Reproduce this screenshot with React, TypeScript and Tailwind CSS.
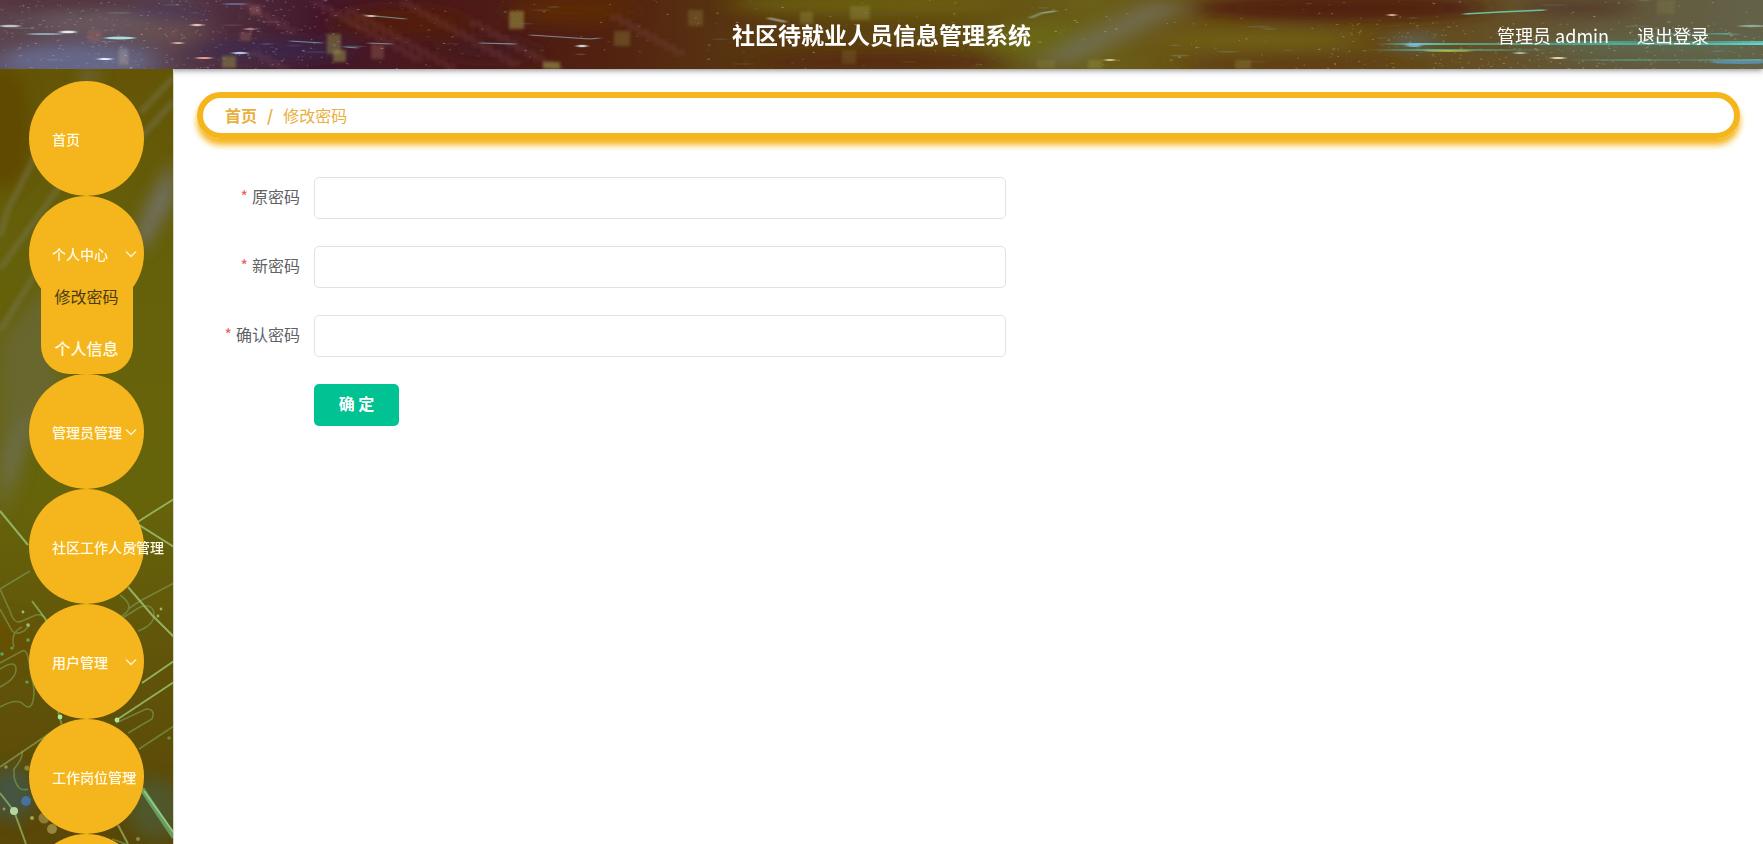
import React from "react";

type MenuEntry = {
  label: string;
  expandable?: boolean;
  children?: { label: string; active?: boolean }[];
};

const menu: MenuEntry[] = [
  { label: "首页" },
  {
    label: "个人中心",
    expandable: true,
    children: [{ label: "修改密码", active: true }, { label: "个人信息" }],
  },
  { label: "管理员管理", expandable: true },
  { label: "社区工作人员管理", expandable: true },
  { label: "用户管理", expandable: true },
  { label: "工作岗位管理", expandable: true },
];

const fields = [
  { id: "old-password", label: "原密码" },
  { id: "new-password", label: "新密码" },
  { id: "confirm-password", label: "确认密码" },
];

// Small seeded generator so the artwork is the same on every render.
function seeded(seed: number) {
  let s = seed;
  return () => {
    s = (s * 16807) % 2147483647;
    return s / 2147483647;
  };
}

const rand = seeded(77);
const specks = Array.from({ length: 900 }, (_, i) => {
  const zone = i % 3;
  const x = zone === 0 ? rand() * 340 : zone === 1 ? rand() * 1763 : 1330 + rand() * 433;
  const y = zone === 0 ? rand() * 69 : zone === 1 ? rand() * 69 : 22 + rand() * 47;
  return { x, y, w: 0.5 + rand() * 1.3, o: 0.1 + rand() * 0.32, c: zone === 0 ? "#b9b6de" : "#cfc8a0" };
});
const trails = Array.from({ length: 40 }, () => ({
  x: rand() * 1740,
  y: rand() * 66,
  w: 6 + rand() * 22,
  o: 0.1 + rand() * 0.2,
}));
const steps = [
  [240, 2, 6], [312, 0, 12], [345, 8, 12], [400, 0, 13], [250, 50, 4], [470, 20, 12], [610, 14, 8],
].flatMap(([x0, y0, n]) =>
  Array.from({ length: n }, (_, i) => ({ x: x0 + i * 9, y: y0 + i * 5 })),
);
const blocks = [
  [509, 11, 15, 18, 0.55], [327, 34, 14, 20, 0.45], [333, 50, 13, 12, 0.5], [222, 56, 14, 12, 0.45],
  [543, 62, 17, 7, 0.6], [688, 10, 15, 16, 0.28], [800, 12, 13, 12, 0.35], [850, 6, 20, 14, 0.35],
  [842, 50, 14, 14, 0.2], [614, 31, 16, 15, 0.3], [1088, 60, 14, 9, 0.35], [1037, 60, 18, 9, 0.2],
  [1235, 60, 16, 9, 0.3], [1657, 0, 18, 14, 0.2],
];
const roseBlocks = [
  [250, 5, 11, 10], [240, 32, 11, 9], [371, 44, 13, 15], [88, 30, 14, 12], [118, 52, 11, 14],
];

function HeaderArt() {
  return (
    <svg
      className="absolute inset-0 h-full w-full"
      viewBox="0 0 1763 69"
      preserveAspectRatio="none"
      aria-hidden="true"
    >
      <defs>
        <linearGradient id="hBase">
          <stop offset="0" stopColor="#5c444e" />
          <stop offset="0.08" stopColor="#5e4a55" />
          <stop offset="0.13" stopColor="#4f2d3c" />
          <stop offset="0.18" stopColor="#43182b" />
          <stop offset="0.25" stopColor="#4c1a1a" />
          <stop offset="0.34" stopColor="#522110" />
          <stop offset="0.42" stopColor="#583611" />
          <stop offset="0.52" stopColor="#5e4712" />
          <stop offset="0.62" stopColor="#6b6019" />
          <stop offset="0.7" stopColor="#684c14" />
          <stop offset="0.8" stopColor="#644917" />
          <stop offset="0.9" stopColor="#64583a" />
          <stop offset="1" stopColor="#636248" />
        </linearGradient>
        <filter id="hSoft" x="-30%" y="-60%" width="160%" height="220%">
          <feGaussianBlur stdDeviation="14 7" />
        </filter>
        <filter id="hFine" x="-30%" y="-200%" width="160%" height="500%">
          <feGaussianBlur stdDeviation="2 0.7" />
        </filter>
        <filter id="hBlock" x="-30%" y="-30%" width="160%" height="160%">
          <feGaussianBlur stdDeviation="1.5" />
        </filter>
        <linearGradient id="hBeam">
          <stop offset="0" stopColor="#4fbfae" stopOpacity="0" />
          <stop offset="0.35" stopColor="#4fc9b8" stopOpacity="0.7" />
          <stop offset="0.6" stopColor="#4aa592" stopOpacity="0.5" />
          <stop offset="1" stopColor="#63ddd4" />
        </linearGradient>
        <linearGradient id="hLeftBeam">
          <stop offset="0" stopColor="#4fc9b8" stopOpacity="0" />
          <stop offset="0.4" stopColor="#62cfae" stopOpacity="0.9" />
          <stop offset="1" stopColor="#4fc9b8" stopOpacity="0.1" />
        </linearGradient>
      </defs>
      <rect width="1763" height="69" fill="url(#hBase)" />
      <g filter="url(#hSoft)">
        <ellipse cx="75" cy="62" rx="80" ry="18" fill="#6b75a0" opacity="0.7" />
        <ellipse cx="70" cy="2" rx="100" ry="6" fill="#4c2430" opacity="0.8" />
        <ellipse cx="95" cy="24" rx="60" ry="12" fill="#6a5a60" opacity="0.8" />
        <ellipse cx="165" cy="32" rx="38" ry="12" fill="#6a5350" opacity="0.8" />
        <ellipse cx="170" cy="13" rx="40" ry="6" fill="#3f3360" opacity="0.6" />
        <ellipse cx="270" cy="50" rx="80" ry="10" fill="#382a58" opacity="0.65" />
        <ellipse cx="570" cy="10" rx="60" ry="14" fill="#602f08" opacity="0.7" />
        <ellipse cx="400" cy="22" rx="70" ry="16" fill="#581e0a" opacity="0.6" />
        <ellipse cx="490" cy="50" rx="50" ry="12" fill="#451521" opacity="0.8" />
        <ellipse cx="870" cy="4" rx="140" ry="12" fill="#6b5f12" opacity="0.9" />
        <ellipse cx="880" cy="62" rx="130" ry="10" fill="#582813" opacity="0.9" />
        <ellipse cx="1040" cy="40" rx="50" ry="18" fill="#6b6619" />
        <path d="M1030 69L1075 62L1190 6L1150 0L1110 22Z" fill="#74746a" opacity="0.7" />
        <ellipse cx="1340" cy="8" rx="150" ry="13" fill="#501f11" opacity="0.95" />
        <ellipse cx="1260" cy="40" rx="100" ry="9" fill="#6f6019" />
        <ellipse cx="1290" cy="64" rx="110" ry="6" fill="#5f3a13" />
        <ellipse cx="1580" cy="8" rx="60" ry="8" fill="#513628" opacity="0.8" />
        <ellipse cx="1640" cy="46" rx="120" ry="8" fill="#55806a" opacity="0.4" />
      </g>
      <g filter="url(#hBlock)">
        {steps.map((b, i) => (
          <rect key={i} x={b.x} y={b.y} width="12" height="7" fill="#9c6068" opacity="0.15" />
        ))}
        {roseBlocks.map(([x, y, w, h], i) => (
          <rect key={i} x={x} y={y} width={w} height={h} fill="#a0675c" opacity="0.38" />
        ))}
        {blocks.map(([x, y, w, h, o], i) => (
          <rect key={i} x={x} y={y} width={w} height={h} fill="#9a9848" opacity={o} />
        ))}
        <rect x="119" y="48" width="9" height="16" fill="#8fb0c0" opacity="0.35" />
      </g>
      {specks.map((p, i) => (
        <ellipse key={i} cx={p.x} cy={p.y} rx={p.w} ry="0.6" fill={p.c} opacity={p.o} />
      ))}
      <g filter="url(#hFine)">
        {trails.map((t, i) => (
          <ellipse key={i} cx={t.x} cy={t.y} rx={t.w / 2} ry="0.9" fill="#8faeb8" opacity={t.o} />
        ))}
        <ellipse cx="10" cy="26" rx="10" ry="1.3" fill="#d5e4e4" opacity="0.8" />
        <ellipse cx="45" cy="34" rx="18" ry="0.9" fill="#9bbcc8" opacity="0.8" />
        <ellipse cx="68" cy="32" rx="8" ry="1.3" fill="#e0f1ee" />
        <ellipse cx="120" cy="38" rx="15" ry="1.4" fill="#a8e0dc" />
        <ellipse cx="105" cy="59" rx="7" ry="0.9" fill="#f3f3ff" />
        <ellipse cx="204" cy="58" rx="8" ry="1" fill="#eba291" />
        <ellipse cx="197" cy="25" rx="6" ry="1.2" fill="#efc8c0" />
        <ellipse cx="240" cy="53" rx="8" ry="1.2" fill="#b9cbea" />
        <ellipse cx="178" cy="43" rx="5" ry="1" fill="#e4b1a2" />
        <ellipse cx="250" cy="29" rx="6" ry="0.8" fill="#d6a0a0" />
        <ellipse cx="235" cy="4" rx="12" ry="1" fill="#6d7fc0" opacity="0.7" />
        <path
          d="M290 41L322 43M364 15L406 19M368 43L392 44M345 47L358 48M480 43L516 44M530 35L590 39L600 38"
          stroke="#8fb4bd"
          strokeWidth="1.1"
          opacity="0.75"
          fill="none"
        />
        <ellipse cx="371" cy="16" rx="4" ry="1" fill="#ecd2c2" />
        <ellipse cx="582" cy="46" rx="5" ry="1.2" fill="#d4dce2" />
        <path d="M1030 18L1042 13L1056 11" stroke="#9db8ae" strokeWidth="1.6" opacity="0.8" fill="none" />
        <path d="M768 18L786 22" stroke="#9aa08f" strokeWidth="2.4" opacity="0.8" fill="none" />
        <path d="M1464 14L1500 12L1545 10" stroke="#6bc3a0" strokeWidth="1.4" fill="none" />
        <ellipse cx="1392" cy="15" rx="4" ry="1.1" fill="#e6c39c" />
        <ellipse cx="1558" cy="58" rx="7" ry="1" fill="#f0ddb5" />
        <ellipse cx="1520" cy="53" rx="6" ry="1.2" fill="#a9bba0" />
        <ellipse cx="1110" cy="60" rx="5" ry="0.9" fill="#dccf9f" />
      </g>
      <ellipse cx="1414" cy="42" rx="22" ry="10" fill="#5c8fc4" opacity="0.4" filter="url(#hSoft)" />
      <g filter="url(#hFine)">
        <rect x="1370" y="43" width="393" height="2" fill="url(#hBeam)" />
        <rect x="1530" y="41" width="240" height="4" fill="url(#hBeam)" opacity="0.8" />
        <rect x="1365" y="49" width="180" height="2" fill="url(#hLeftBeam)" opacity="0.8" />
        <rect x="1380" y="43" width="110" height="2" fill="url(#hLeftBeam)" />
        <ellipse cx="1448" cy="51" rx="24" ry="0.9" fill="#b4bf4d" opacity="0.8" />
        <rect x="1560" y="59" width="203" height="2" fill="url(#hBeam)" opacity="0.6" />
        <ellipse cx="1740" cy="62" rx="30" ry="2" fill="#5b9ec8" opacity="0.7" />
        <rect x="1640" y="33" width="90" height="1.6" fill="url(#hBeam)" opacity="0.6" />
        <ellipse cx="1752" cy="26" rx="14" ry="1.2" fill="#9cc9b8" opacity="0.7" />
        <ellipse cx="1414" cy="45" rx="8" ry="2" fill="#7cc4e0" opacity="0.8" />
      </g>
    </svg>
  );
}

function SidebarArt() {
  return (
    <svg
      className="absolute inset-0 h-full w-full"
      viewBox="0 0 174 775"
      preserveAspectRatio="xMinYMin slice"
      aria-hidden="true"
    >
      <defs>
        <linearGradient id="sBase" x1="0" y1="0" x2="0" y2="1">
          <stop offset="0" stopColor="#645506" />
          <stop offset="0.25" stopColor="#65610b" />
          <stop offset="0.55" stopColor="#66640b" />
          <stop offset="0.75" stopColor="#615509" />
          <stop offset="1" stopColor="#594708" />
        </linearGradient>
        <filter id="sSoft" x="-50%" y="-50%" width="200%" height="200%">
          <feGaussianBlur stdDeviation="8" />
        </filter>
        <filter id="sStreak" x="-20%" y="-20%" width="140%" height="140%">
          <feGaussianBlur stdDeviation="2" />
        </filter>
        <filter id="sFine" x="-20%" y="-20%" width="140%" height="140%">
          <feGaussianBlur stdDeviation="0.7" />
        </filter>
      </defs>
      <rect width="174" height="775" fill="url(#sBase)" />
      <g filter="url(#sSoft)">
        <path d="M174 90L150 130L134 170L145 180L174 130Z" fill="#74747a" opacity="0.8" />
        <path d="M84 0L100 0L92 18L80 18Z" fill="#77776a" opacity="0.6" />
        <path d="M60 200L0 270L0 420L14 400L60 330Z" fill="#6b6b45" opacity="0.6" />
        <path d="M36 330L0 390L0 450L18 410Z" fill="#74746a" opacity="0.5" />
        <ellipse cx="5" cy="60" rx="26" ry="60" fill="#604900" />
        <ellipse cx="12" cy="725" rx="22" ry="26" fill="#3b5a58" opacity="0.7" />
        <ellipse cx="155" cy="740" rx="26" ry="30" fill="#4e5a33" opacity="0.8" />
        <ellipse cx="10" cy="570" rx="20" ry="22" fill="#6b4b08" opacity="0.6" />
      </g>
      <g stroke="#7f7f66" strokeWidth="6" opacity="0.38" fill="none" filter="url(#sStreak)">
        <path d="M174 8L140 44M174 32L132 78M36 86L8 140L0 168M62 114L0 200M44 190L0 262" />
      </g>
      <g filter="url(#sFine)" fill="none">
        <g stroke="#7a9650" strokeWidth="1.6" opacity="0.7">
          <path d="M30 502L0 520M174 514L140 532L128 540" />
          <path d="M0 520L10 542Q14 556 22 552L36 546Q48 544 46 560" />
          <path d="M0 540L10 558Q14 568 24 562L30 556" />
          <path d="M120 526Q134 536 126 544L118 550" />
          <path d="M14 578Q10 564 22 558M0 594L22 582Q26 580 28 588L34 620Q34 644 24 636Q18 628 0 638" />
          <path d="M0 600Q16 590 16 600Q16 610 0 618" />
          <path d="M118 552L140 538Q154 534 154 546Q154 556 138 562" />
          <path d="M116 654L146 640Q156 640 152 650L128 664M139 680L174 657" />
          <path d="M22 682Q24 688 14 700L14 708Q18 724 28 720" />
          <path d="M112 770L126 775" />
        </g>
        <g stroke="#9cc070" strokeWidth="2" opacity="0.85">
          <path d="M0 442L28 476M174 430L136 454L174 478M128 518L152 546L174 568" />
          <path d="M32 532L50 556" opacity="0.8" />
          <path d="M174 592L142 614M174 613L118 650" />
          <path d="M58 642L64 664M0 698L62 656" opacity="0.6" />
          <path d="M14 742L0 724M14 742L26 775M118 756L128 775" opacity="0.8" />
        </g>
        <path d="M142 720L174 768" stroke="#6fae6c" strokeWidth="5" opacity="0.8" />
        <path d="M144 722L174 764" stroke="#93cb85" strokeWidth="1.6" />
      </g>
      <g filter="url(#sFine)">
        <circle cx="137" cy="454" r="2" fill="#c9e698" />
        <circle cx="60" cy="648" r="2.4" fill="#a9e8a0" />
        <circle cx="117" cy="651" r="2.4" fill="#a9e8a0" />
        <circle cx="14" cy="742" r="4" fill="#b4d9a0" />
        <circle cx="26" cy="732" r="5" fill="#44719a" />
        <circle cx="44" cy="749" r="5.5" fill="#8d7d35" />
        <circle cx="52" cy="760" r="5" fill="#97863a" />
        <circle cx="27" cy="699" r="2.6" fill="#93852c" />
        <circle cx="32" cy="749" r="2" fill="#a5a44a" />
        <circle cx="6" cy="698" r="1.8" fill="#8f9440" />
        <circle cx="4" cy="740" r="1.4" fill="#a5944a" />
        <circle cx="161" cy="540" r="1.4" fill="#98b560" />
        <circle cx="158" cy="547" r="1.4" fill="#98b560" />
        <circle cx="23" cy="543" r="1.4" fill="#9cc071" />
        <circle cx="28" cy="556" r="1.8" fill="#9cc071" />
        <circle cx="28" cy="571" r="1.8" fill="#5aa850" />
        <circle cx="12" cy="579" r="1.6" fill="#5aa850" />
        <circle cx="2" cy="585" r="1.8" fill="#5aa850" />
        <circle cx="27" cy="613" r="1.6" fill="#5aa850" />
        <circle cx="169" cy="669" r="1.8" fill="#768243" />
        <circle cx="138" cy="770" r="2" fill="#8a8a3e" />
      </g>
    </svg>
  );
}

function Chevron() {
  return (
    <svg
      className="absolute right-[7px] top-1/2 h-2 w-3 -translate-y-1/2"
      viewBox="0 0 12 8"
      fill="none"
      stroke="#fff3cf"
      strokeWidth="1.4"
      aria-hidden="true"
    >
      <path d="M1 1.4L6 6.4L11 1.4" />
    </svg>
  );
}

function Sidebar() {
  return (
    <aside className="relative w-[174px] shrink-0 overflow-hidden border-r border-[#d9d8c4]">
      <SidebarArt />
      <nav className="relative pt-3">
        <ul className="flex flex-col items-center">
          {menu.map((item) => (
            <li key={item.label} className="flex flex-col items-center">
              <button
                type="button"
                className="relative flex size-[115px] items-center whitespace-nowrap rounded-full bg-[#f5b51d] pl-[23px] text-left text-sm font-medium text-[#fffbe6]"
              >
                {item.label}
                {item.expandable && <Chevron />}
              </button>
              {item.children && (
                <ul className="relative -mt-[41px] w-[92px] rounded-b-[28px] bg-[#f5b51d]">
                  {item.children.map((child) => (
                    <li key={child.label}>
                      <a
                        href="#"
                        className={
                          child.active
                            ? "flex h-[52px] items-center justify-center whitespace-nowrap text-base text-[#4b3d13]"
                            : "flex h-[52px] items-center justify-center whitespace-nowrap text-base font-medium text-[#fffbe6]"
                        }
                      >
                        {child.label}
                      </a>
                    </li>
                  ))}
                </ul>
              )}
            </li>
          ))}
          <li className="size-[115px] rounded-full bg-[#f5b51d]" />
        </ul>
      </nav>
    </aside>
  );
}

export default function App() {
  return (
    <div className="flex h-screen flex-col bg-white font-['Noto_Sans_CJK_SC',sans-serif]">
      <header className="relative grid h-[69px] shrink-0 grid-cols-[1fr_auto_1fr] items-center shadow-[0_1px_6px_rgba(0,0,0,0.5)]">
        <HeaderArt />
        <h1 className="relative col-start-2 text-[23px] font-bold text-white">社区待就业人员信息管理系统</h1>
        <div className="relative flex justify-end gap-7 pr-[54px] text-lg text-white">
          <span>管理员 admin</span>
          <a href="#">退出登录</a>
        </div>
      </header>
      <div className="flex min-h-0 flex-1">
        <Sidebar />
        <main className="min-w-0 flex-1 px-[23px] pt-[23px]">
          <nav
            aria-label="breadcrumb"
            className="flex h-[47px] items-center gap-2.5 rounded-full border-6 border-[#f5b51d] px-[22px] pb-0.5 text-base text-[#e8b040] shadow-[0_6px_6px_#f5b51d]"
          >
            <a href="#" className="font-bold">首页</a>
            <span className="font-bold">/</span>
            <span>修改密码</span>
          </nav>
          <form className="mt-[38px] flex max-w-[809px] flex-col gap-[27px]" onSubmit={(e) => e.preventDefault()}>
            {fields.map((f) => (
              <div key={f.id} className="flex items-center">
                <label htmlFor={f.id} className="w-[117px] shrink-0 pb-1 pr-3.5 text-right text-base text-[#606266]">
                  <span className="mr-1 text-[#e9605c]">*</span>
                  {f.label}
                </label>
                <input
                  id={f.id}
                  type="password"
                  className="h-[42px] min-w-0 flex-1 rounded-[5px] border border-[#dfe2e8] px-4 text-base outline-none"
                />
              </div>
            ))}
            <button
              type="submit"
              className="ml-[117px] h-[42px] w-[85px] rounded-[5px] bg-[#00c292] pb-1 text-base font-bold text-white"
            >
              确 定
            </button>
          </form>
        </main>
      </div>
    </div>
  );
}
